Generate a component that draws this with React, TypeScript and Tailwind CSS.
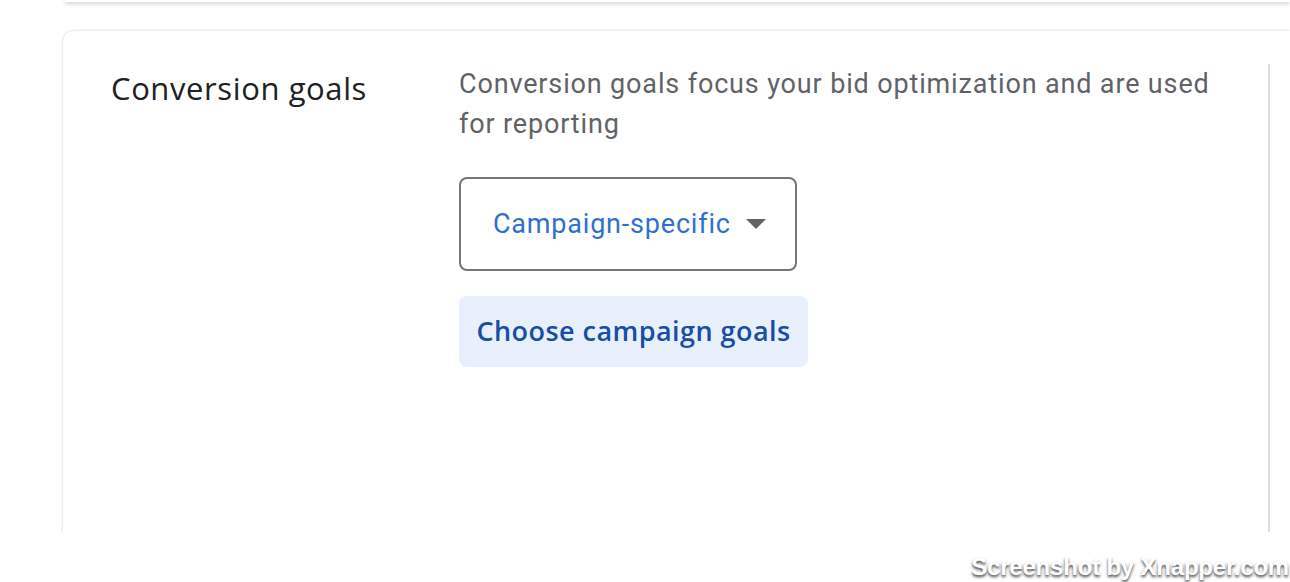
export default function App() {
  return (
    <div className="relative w-[1290px] h-[582px] bg-white overflow-hidden">
      <div className="h-[532px] bg-white overflow-hidden pl-[63px]">
        {/* previous card, only its bottom edge is visible */}
        <div className="h-[2px] bg-white shadow-[0_1px_4px_rgba(0,0,0,0.35)] ml-[2px]" />
        <div className="mt-[29px] h-[600px] bg-white rounded-tl-[10px] shadow-[0_0_3px_rgba(0,0,0,0.2)] flex items-start">
          <div className="w-[396px] pl-[48px] pt-[38px]">
            <h2 className="text-[31px] leading-[38px] text-[#202124] font-['Open_Sans',sans-serif] font-medium tracking-[0.6px]">
              Conversion goals
            </h2>
          </div>
          <div className="w-[811px] mt-[33px] h-[520px] border-r-2 border-[#e0e0e0]">
            <p className="w-[770px] text-[27px] leading-[40px] text-[#5f6368] font-['Roboto',sans-serif] tracking-[0.85px]">
              Conversion goals focus your bid optimization and are used for reporting
            </p>
            <button className="mt-[33px] w-[338px] h-[94px] border-2 border-[#767676] rounded-[8px] flex items-center pl-[32px] gap-[15px]">
              <span className="text-[27px] text-[#2f6fd0] font-['Roboto',sans-serif] tracking-[0.8px]">Campaign-specific</span>
              <svg width="20" height="10" viewBox="0 0 20 10">
                <path d="M0 0 L20 0 L10 10 Z" fill="#5f6368" />
              </svg>
            </button>
            <button className="mt-[25px] w-[349px] h-[71px] bg-[#e8f0fe] rounded-[8px] flex items-center justify-center">
              <span className="text-[27px] text-[#174ea6] font-['Open_Sans',sans-serif] font-[560] tracking-[0.45px]">Choose campaign goals</span>
            </button>
          </div>
        </div>
      </div>
      <div className="absolute right-[1px] bottom-[1px] text-[24px] leading-[28px] font-bold text-white font-['Liberation_Sans',sans-serif] [text-shadow:0_2px_3px_rgba(0,0,0,0.75)] tracking-[-0.2px]">
        Screenshot by Xnapper.com
      </div>
    </div>
  );
}
